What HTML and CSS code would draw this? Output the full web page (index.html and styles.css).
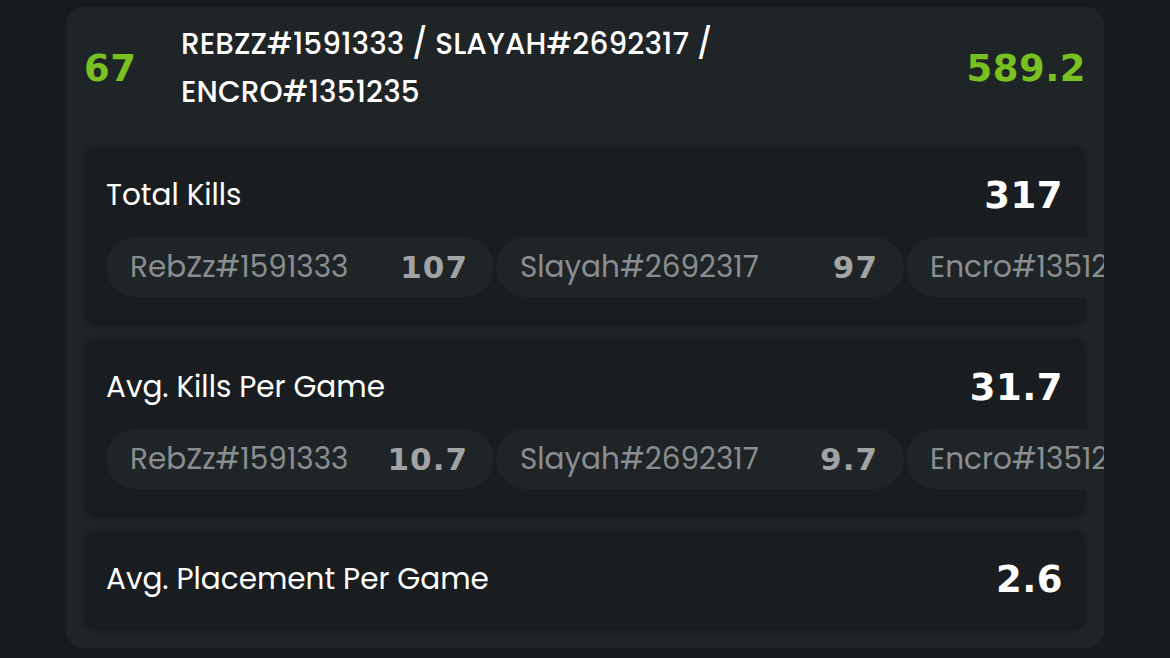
FILE: index.html
```html
<!DOCTYPE html>
<html lang="en">
<head>
<meta charset="UTF-8" />
<title>Team Stats</title>
<link rel="stylesheet" href="styles.css">
</head>
<body>

<div class="page">
    <div class="team-card">
        <div class="team-head">
            <div class="team-rank">67</div>
            <div class="team-names">REBZZ#1591333 / SLAYAH#2692317 /<br>ENCRO#1351235</div>
            <div class="team-score">589.2</div>
        </div>

        <div class="stat-card">
            <div class="stat-row">
                <span class="stat-label">Total Kills</span>
                <span class="stat-value">317</span>
            </div>
            <div class="player-row">
                <div class="player-pill">
                    <span class="player-name">RebZz#1591333</span>
                    <span class="player-value">107</span>
                </div>
                <div class="player-pill">
                    <span class="player-name">Slayah#2692317</span>
                    <span class="player-value">97</span>
                </div>
                <div class="player-pill">
                    <span class="player-name">Encro#1351235</span>
                    <span class="player-value">113</span>
                </div>
            </div>
        </div>

        <div class="stat-card">
            <div class="stat-row">
                <span class="stat-label">Avg. Kills Per Game</span>
                <span class="stat-value">31.7</span>
            </div>
            <div class="player-row">
                <div class="player-pill">
                    <span class="player-name">RebZz#1591333</span>
                    <span class="player-value">10.7</span>
                </div>
                <div class="player-pill">
                    <span class="player-name">Slayah#2692317</span>
                    <span class="player-value">9.7</span>
                </div>
                <div class="player-pill">
                    <span class="player-name">Encro#1351235</span>
                    <span class="player-value">11.3</span>
                </div>
            </div>
        </div>

        <div class="stat-card">
            <div class="stat-row">
                <span class="stat-label">Avg. Placement Per Game</span>
                <span class="stat-value">2.6</span>
            </div>
        </div>
    </div>
</div>

</body>
</html>
```

FILE: styles.css
```css
body {
    margin: 0;
    padding: 0;
    background-color: #171b1e;
    font-family: 'Poppins', 'Inter', 'Noto Sans', sans-serif;
    color: #ffffff;
}

.page {
    padding: 7px 66px 0 66px;
}

/* Carta da equipa */
.team-card {
    background-color: #1f2427;
    border-radius: 18px;
    padding: 13px 20px 21px 20px;
    overflow: hidden;
}

.team-head {
    display: flex;
    align-items: center;
    margin: 0 -2px 30px -2px;
}

.team-rank,
.team-score {
    font-family: 'DejaVu Sans', sans-serif;
    font-weight: bold;
    font-size: 37px;
    color: #79c120;
    letter-spacing: 0.5px;
}

.team-rank {
    width: 97px;
    flex-shrink: 0;
}

.team-score {
    margin-left: auto;
}

.team-names {
    font-size: 29.5px;
    font-weight: 500;
    line-height: 48px;
    letter-spacing: 0.1px;
}

/* Cartões de estatística */
.stat-card {
    background-color: #1a1d20;
    border-radius: 10px;
    padding: 25px 21px 25px 20px;
    margin-bottom: 16px;
    box-shadow: 0 2px 6px rgba(0, 0, 0, 0.45);
}

.stat-card:last-child {
    margin-bottom: 0;
    padding-bottom: 24px;
}

.stat-row {
    display: flex;
    align-items: center;
    justify-content: space-between;
    height: 48px;
}

.stat-label {
    font-size: 29.5px;
}

.stat-value {
    font-family: 'DejaVu Sans', sans-serif;
    font-weight: bold;
    font-size: 37px;
    letter-spacing: 0.5px;
}

.player-row {
    display: flex;
    gap: 2px;
    margin-top: 18px;
    margin-right: -60px;
}

.player-pill {
    flex-shrink: 0;
    display: flex;
    align-items: center;
    justify-content: space-between;
    height: 60px;
    padding: 0 26px 0 24px;
    border-radius: 30px;
    background-color: #1f2427;
    box-sizing: border-box;
    width: 388px;
}

.player-pill:nth-child(2) {
    width: 408px;
}

.player-pill:nth-child(3) {
    width: 400px;
}

.player-name {
    font-size: 29.5px;
    color: #8b8e91;
}

.player-value {
    font-family: 'DejaVu Sans', sans-serif;
    font-weight: bold;
    font-size: 31px;
    color: #a1a3a5;
    letter-spacing: 1px;
}
```
